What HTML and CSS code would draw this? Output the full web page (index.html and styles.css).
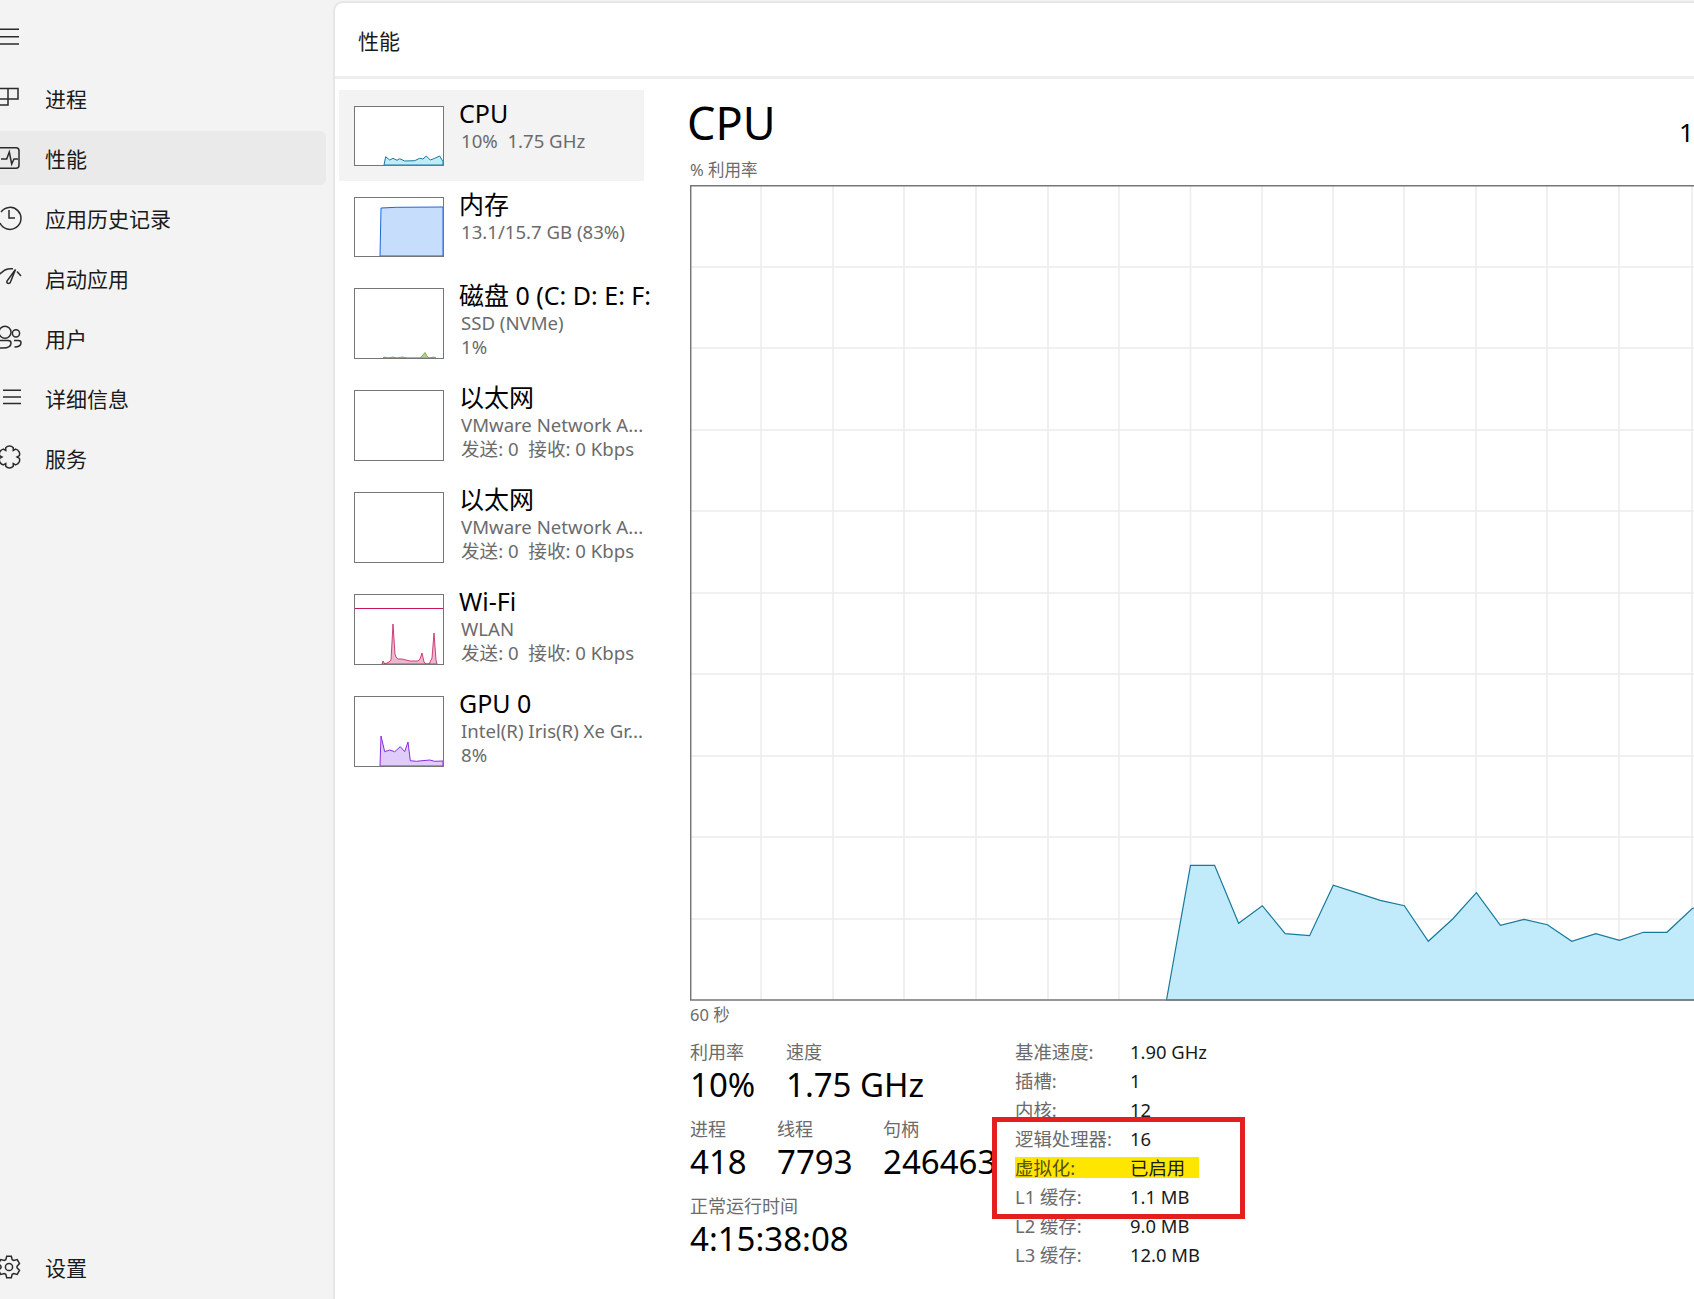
FILE: index.html
```html
<!DOCTYPE html>
<html lang="zh-CN">
<head>
    <meta charset="UTF-8">
    <title>任务管理器 - 性能</title>
    <link rel="stylesheet" href="styles.css">
</head>
<body>
    <aside class="sidebar">
        <div class="nav-item">
            <svg class="icon" viewBox="0 0 24 24"><path d="M0 3.2H22M0 10.7H22M0 18H22"/></svg>
        </div>
        <div class="nav-item">
            <svg class="icon" viewBox="0 0 24 24"><path d="M0 2.5H21V13H0M11 2.5V19H0"/></svg>
            <span>进程</span>
        </div>
        <div class="nav-item active">
            <svg class="icon" viewBox="0 0 24 24"><rect x="-4" y="1.7" width="26" height="20.6" rx="3"/><path d="M4 13H9.7L12.3 6L14.7 18L17 13H21"/></svg>
            <span>性能</span>
        </div>
        <div class="nav-item">
            <svg class="icon" viewBox="0 0 24 24"><path d="M4 6A11 11 0 1 1 3 17M12 4V12H18"/></svg>
            <span>应用历史记录</span>
        </div>
        <div class="nav-item">
            <svg class="icon" viewBox="0 0 24 24"><path d="M0 10L8 4C10 3 13 2.5 16 2.8M20 5.5L24 10M18.5 3.5L10 15C9 17.5 12.5 18.5 13.5 16Z"/></svg>
            <span>启动应用</span>
        </div>
        <div class="nav-item">
            <svg class="icon" viewBox="0 0 24 24"><circle cx="8" cy="6.3" r="6"/><circle cx="19" cy="7.3" r="3.6"/><path d="M0 14.5H11C13 14.5 14 15.5 14 17C14 20.5 10.5 22 6 22H0M17 14.5H21.5C23 14.5 24 15.3 24 16.8C24 19.5 21.5 21 17.5 21"/></svg>
            <span>用户</span>
        </div>
        <div class="nav-item">
            <svg class="icon" viewBox="0 0 24 24"><path d="M6 4.2H24M6 11H24M6 17.5H24"/></svg>
            <span>详细信息</span>
        </div>
        <div class="nav-item">
            <svg class="icon" viewBox="0 0 24 24"><path d="M8.75 1.73A5 5 0 0 1 16.25 1.73L16.25 4.5L18.66 3.12A5 5 0 0 1 22.4 9.6L20 11L22.4 12.4A5 5 0 0 1 18.66 18.88L16.25 17.5L16.25 20.27A5 5 0 0 1 8.75 20.27L8.75 17.5L6.34 18.88A5 5 0 0 1 2.6 12.4L5 11L2.6 9.6A5 5 0 0 1 6.34 3.12L8.75 4.5Z"/></svg>
            <span>服务</span>
        </div>
        <div class="nav-item settings">
            <svg class="icon" viewBox="0 0 24 24"><path d="M9.7 1.2H14.3L15.2 4.7L16.7 5.5L20.2 4.6L22.5 8.6L20 11.2V12.8L22.5 15.4L20.2 19.4L16.7 18.5L15.2 19.3L14.3 22.8H9.7L8.8 19.3L7.3 18.5L3.8 19.4L1.5 15.4L4 12.8V11.2L1.5 8.6L3.8 4.6L7.3 5.5L8.8 4.7Z"/><circle cx="12" cy="12" r="3.6"/></svg>
            <span>设置</span>
        </div>
    </aside>

    <main class="panel">
        <header class="panel-head">性能</header>
        <div class="panel-body">
            <section class="dev-list">
                <div class="dev selected">
                    <svg class="mini" viewBox="0 0 88 58" preserveAspectRatio="none"><polygon class="cpu-fill" points="29,58 30.7,49.7 34.7,53 38,51.3 42,53.3 44.7,51.7 49.7,54 59.7,53.7 64.7,51.3 68,52 71.3,49 75.3,53 79.7,51.3 84.7,49 88,54.7 88,58"/></svg>
                    <div class="dev-text">
                        <div class="dev-name">CPU</div>
                        <div class="dev-sub">10%&nbsp; 1.75 GHz</div>
                    </div>
                </div>
                <div class="dev">
                    <svg class="mini" viewBox="0 0 88 58" preserveAspectRatio="none"><polygon class="mem-fill" points="25,58 26,10 41.3,9.3 88,9 88,58"/></svg>
                    <div class="dev-text">
                        <div class="dev-name">内存</div>
                        <div class="dev-sub">13.1/15.7 GB (83%)</div>
                    </div>
                </div>
                <div class="dev tall">
                    <svg class="mini" viewBox="0 0 88 69" preserveAspectRatio="none"><polygon class="disk-fill" points="28,69 29,68 33,69 38,68 42,69 47,68 52,69 65,69 67,67 70,63.5 72,67 74,69 79,68 81,69"/></svg>
                    <div class="dev-text">
                        <div class="dev-name">磁盘 0 (C: D: E: F:</div>
                        <div class="dev-sub">SSD (NVMe)</div>
                        <div class="dev-sub">1%</div>
                    </div>
                </div>
                <div class="dev tall">
                    <svg class="mini" viewBox="0 0 88 69" preserveAspectRatio="none"></svg>
                    <div class="dev-text">
                        <div class="dev-name">以太网</div>
                        <div class="dev-sub">VMware Network A...</div>
                        <div class="dev-sub">发送: 0&nbsp; 接收: 0 Kbps</div>
                    </div>
                </div>
                <div class="dev tall">
                    <svg class="mini" viewBox="0 0 88 69" preserveAspectRatio="none"></svg>
                    <div class="dev-text">
                        <div class="dev-name">以太网</div>
                        <div class="dev-sub">VMware Network A...</div>
                        <div class="dev-sub">发送: 0&nbsp; 接收: 0 Kbps</div>
                    </div>
                </div>
                <div class="dev tall">
                    <svg class="mini" viewBox="0 0 88 69" preserveAspectRatio="none"><path class="wifi-line" d="M0 13.5H88"/><polygon class="wifi-fill" points="27,69 28,66 30,69 34,67 36,65 38,29 40,59 41,62 43,64 47,64 51,65 55,66 59,66 63,66 65,64 67,58 69,67 71,69 74,69 77,63 79,38 81,65 82,69"/></svg>
                    <div class="dev-text">
                        <div class="dev-name">Wi-Fi</div>
                        <div class="dev-sub">WLAN</div>
                        <div class="dev-sub">发送: 0&nbsp; 接收: 0 Kbps</div>
                    </div>
                </div>
                <div class="dev tall">
                    <svg class="mini" viewBox="0 0 88 69" preserveAspectRatio="none"><polygon class="gpu-fill" points="25,69 26,39 29.7,54.7 34.7,53 39.7,54.7 45.3,49.7 49.7,54.7 53,45 55.3,63.7 61.3,64.3 74.7,63 79.7,64.3 88,64 88,69"/></svg>
                    <div class="dev-text">
                        <div class="dev-name">GPU 0</div>
                        <div class="dev-sub">Intel(R) Iris(R) Xe Gr...</div>
                        <div class="dev-sub">8%</div>
                    </div>
                </div>
            </section>

            <section class="detail">
                <div class="detail-head">
                    <h1>CPU</h1>
                    <div class="cpu-model">13th Gen Intel(R) Core(TM) i5-1340P</div>
                </div>
                <div class="graph-label">% 利用率</div>
                <svg class="graph" viewBox="690 185 1070 816" width="1070" height="816">
                    <path class="grid" d="M761 185V1000M833 185V1000M904 185V1000M976 185V1000M1048 185V1000M1119 185V1000M1190.5 185V1000M1262 185V1000M1333 185V1000M1404 185V1000M1476 185V1000M1547 185V1000M1619 185V1000M1692 185V1000M690 267H1760M690 348H1760M690 430H1760M690 511H1760M690 593H1760M690 674H1760M690 756H1760M690 837H1760M690 919H1760"/>
                    <polygon class="cpu-area" points="1166.5,1000 1190.5,865.3 1214.6,865.3 1238.6,923.3 1262.3,905.7 1285.2,933.7 1309.6,935.7 1333.3,885.3 1380.3,900.3 1404.3,905.7 1428.3,941.3 1452.7,919 1476.4,892.7 1500.4,925.3 1524,919.3 1547.4,924.7 1571.8,941.3 1595.8,933.7 1619.5,940.3 1643.5,932.3 1666.9,932.3 1692,908.7 1716,900 1716,1000"/>
                    <path class="frame" d="M690.7 1000V185.7H1760M690 1000H1760"/>
                </svg>
                <div class="graph-foot">60 秒</div>

                <div class="info">
                    <div class="stats">
                        <div class="stat-row">
                            <div class="stat w-util"><div class="stat-label">利用率</div><div class="stat-value">10%</div></div>
                            <div class="stat"><div class="stat-label">速度</div><div class="stat-value">1.75 GHz</div></div>
                        </div>
                        <div class="stat-row">
                            <div class="stat w-proc"><div class="stat-label">进程</div><div class="stat-value">418</div></div>
                            <div class="stat w-thread"><div class="stat-label">线程</div><div class="stat-value">7793</div></div>
                            <div class="stat"><div class="stat-label">句柄</div><div class="stat-value">246463</div></div>
                        </div>
                        <div class="stat-row">
                            <div class="stat"><div class="stat-label">正常运行时间</div><div class="stat-value">4:15:38:08</div></div>
                        </div>
                    </div>
                    <div class="specs">
                        <div class="spec"><span>基准速度:</span><b>1.90 GHz</b></div>
                        <div class="spec"><span>插槽:</span><b>1</b></div>
                        <div class="spec"><span>内核:</span><b>12</b></div>
                        <div class="spec"><span>逻辑处理器:</span><b>16</b></div>
                        <div class="spec marked"><span>虚拟化:</span><b>已启用</b></div>
                        <div class="spec"><span>L1 缓存:</span><b>1.1 MB</b></div>
                        <div class="spec"><span>L2 缓存:</span><b>9.0 MB</b></div>
                        <div class="spec"><span>L3 缓存:</span><b>12.0 MB</b></div>
                        <div class="red-box"></div>
                    </div>
                </div>
            </section>
        </div>
    </main>
</body>
</html>
```

FILE: styles.css
```css
html, body {
    height: 100%;
}
body {
    margin: 0;
    display: flex;
    overflow: hidden;
    background-color: #f3f3f3;
    color: #1a1a1a;
    font-family: "Noto Sans", "Noto Sans CJK SC", sans-serif;
}

/* left navigation */
.sidebar {
    flex: none;
    width: 333px;
    height: 1299px;
    box-sizing: border-box;
    padding: 11px 7px 5px 0;
    display: flex;
    flex-direction: column;
    gap: 6px;
}
.nav-item {
    height: 54px;
    flex: none;
    display: flex;
    align-items: center;
    gap: 24px;
    font-size: 21px;
    border-radius: 0 6px 6px 0;
}
.nav-item.active {
    background-color: #eaeaea;
}
.nav-item.settings {
    margin-top: auto;
}
.icon {
    flex: none;
    width: 24px;
    height: 24px;
    margin-left: -3px;
    fill: none;
    stroke: #2b2b2b;
    stroke-width: 1.5;
    overflow: visible;
}

/* main panel */
.panel {
    flex: 1;
    min-width: 0;
    margin-top: 1px;
    background-color: white;
    border-top: 2px solid #e6e6e6;
    border-left: 2px solid #e6e6e6;
    border-top-left-radius: 10px;
}
.panel-head {
    height: 76px;
    box-sizing: border-box;
    padding: 0 0 0 23px;
    font-size: 21px;
    line-height: 77px;
    border-bottom: 3px solid #eeeeee;
}
.panel-body {
    display: flex;
}

/* device list */
.dev-list {
    flex: none;
    width: 309px;
    box-sizing: border-box;
    padding: 11px 0 0 4px;
}
.dev {
    width: 305px;
    height: 91px;
    box-sizing: border-box;
    padding: 16px 0 15px 15px;
    display: flex;
    gap: 15px;
}
.dev.tall {
    height: 102px;
}
.dev.selected {
    background-color: #f3f3f3;
}
.mini {
    flex: none;
    width: 90px;
    height: 100%;
    box-sizing: border-box;
    border: 1px solid #767676;
    background-color: white;
}
.dev-text {
    flex: none;
    width: 190px;
    margin-top: -8px;
}
.dev-name {
    font-size: 25px;
    line-height: 31px;
    color: #000;
    white-space: nowrap;
}
.dev-sub {
    font-size: 18.6px;
    line-height: 24px;
    color: #6b6b6b;
    margin-left: 2px;
    white-space: nowrap;
}
.cpu-fill, .cpu-area {
    fill: #c1ebfa;
    stroke: #17799c;
    stroke-width: 1;
}
.cpu-area {
    stroke-width: 1.2;
}
.mem-fill {
    fill: #c6defb;
    stroke: #1d66dc;
    stroke-width: 1;
}
.disk-fill {
    fill: #b9d08a;
    stroke: #6f9a2c;
    stroke-width: 0.8;
}
.wifi-line {
    fill: none;
    stroke: #c5175f;
    stroke-width: 1;
}
.wifi-fill {
    fill: #ebb9cd;
    stroke: #c5175f;
    stroke-width: 0.8;
}
.gpu-fill {
    fill: #e0ccfb;
    stroke: #8a2be2;
    stroke-width: 1;
}

/* cpu detail */
.detail {
    flex: none;
    padding-left: 44px;
    width: 1100px;
}
.detail-head {
    display: grid;
    grid-template-columns: 991px auto;
    height: 79px;
    align-items: center;
    white-space: nowrap;
}
.detail-head h1 {
    margin: 0 0 0 -1px;
    font-size: 45px;
    font-weight: normal;
    line-height: 60px;
    color: #000;
    padding-top: 8px;
}
.cpu-model {
    font-size: 26px;
    color: #000;
    padding-top: 26px;
}
.graph-label {
    margin-left: 2px;
    height: 27px;
    font-size: 16.5px;
    line-height: 24px;
    color: #6b6b6b;
}
.graph {
    display: block;
    margin-left: 2px;
}
.grid {
    fill: none;
    stroke: #ececec;
    stroke-width: 1.5;
}
.frame {
    fill: none;
    stroke: #767676;
    stroke-width: 1.5;
}
.graph-foot {
    margin-left: 2px;
    height: 36px;
    margin-top: 1px;
    font-size: 16.5px;
    line-height: 26px;
    color: #6b6b6b;
}
.info {
    display: flex;
}
.stats {
    flex: none;
    width: 325px;
    margin-left: 2px;
    padding-top: 2px;
}
.stat-row {
    display: flex;
    height: 77px;
}
.stat {
    flex: none;
    white-space: nowrap;
}
.w-util {
    width: 96px;
}
.w-proc {
    width: 87px;
}
.w-thread {
    width: 106px;
}
.stat-label {
    font-size: 18px;
    line-height: 24px;
    color: #6b6b6b;
}
.stat-value {
    font-size: 33px;
    line-height: 42px;
    color: #000;
}
.specs {
    position: relative;
    flex: none;
    margin-top: -1px;
}
.spec {
    display: grid;
    grid-template-columns: 115px auto;
    width: 184px;
    height: 29px;
    font-size: 18.4px;
    line-height: 29px;
    color: #6b6b6b;
    white-space: nowrap;
}
.spec b {
    font-weight: normal;
    color: #1a1a1a;
}
.spec.marked {
    background: linear-gradient(#ffe600, #ffe600) center / 100% 21px no-repeat;
    color: #55500a;
}
.red-box {
    position: absolute;
    left: -23px;
    top: 80px;
    width: 253px;
    height: 102px;
    box-sizing: border-box;
    border: 5px solid #e3201f;
}
```
